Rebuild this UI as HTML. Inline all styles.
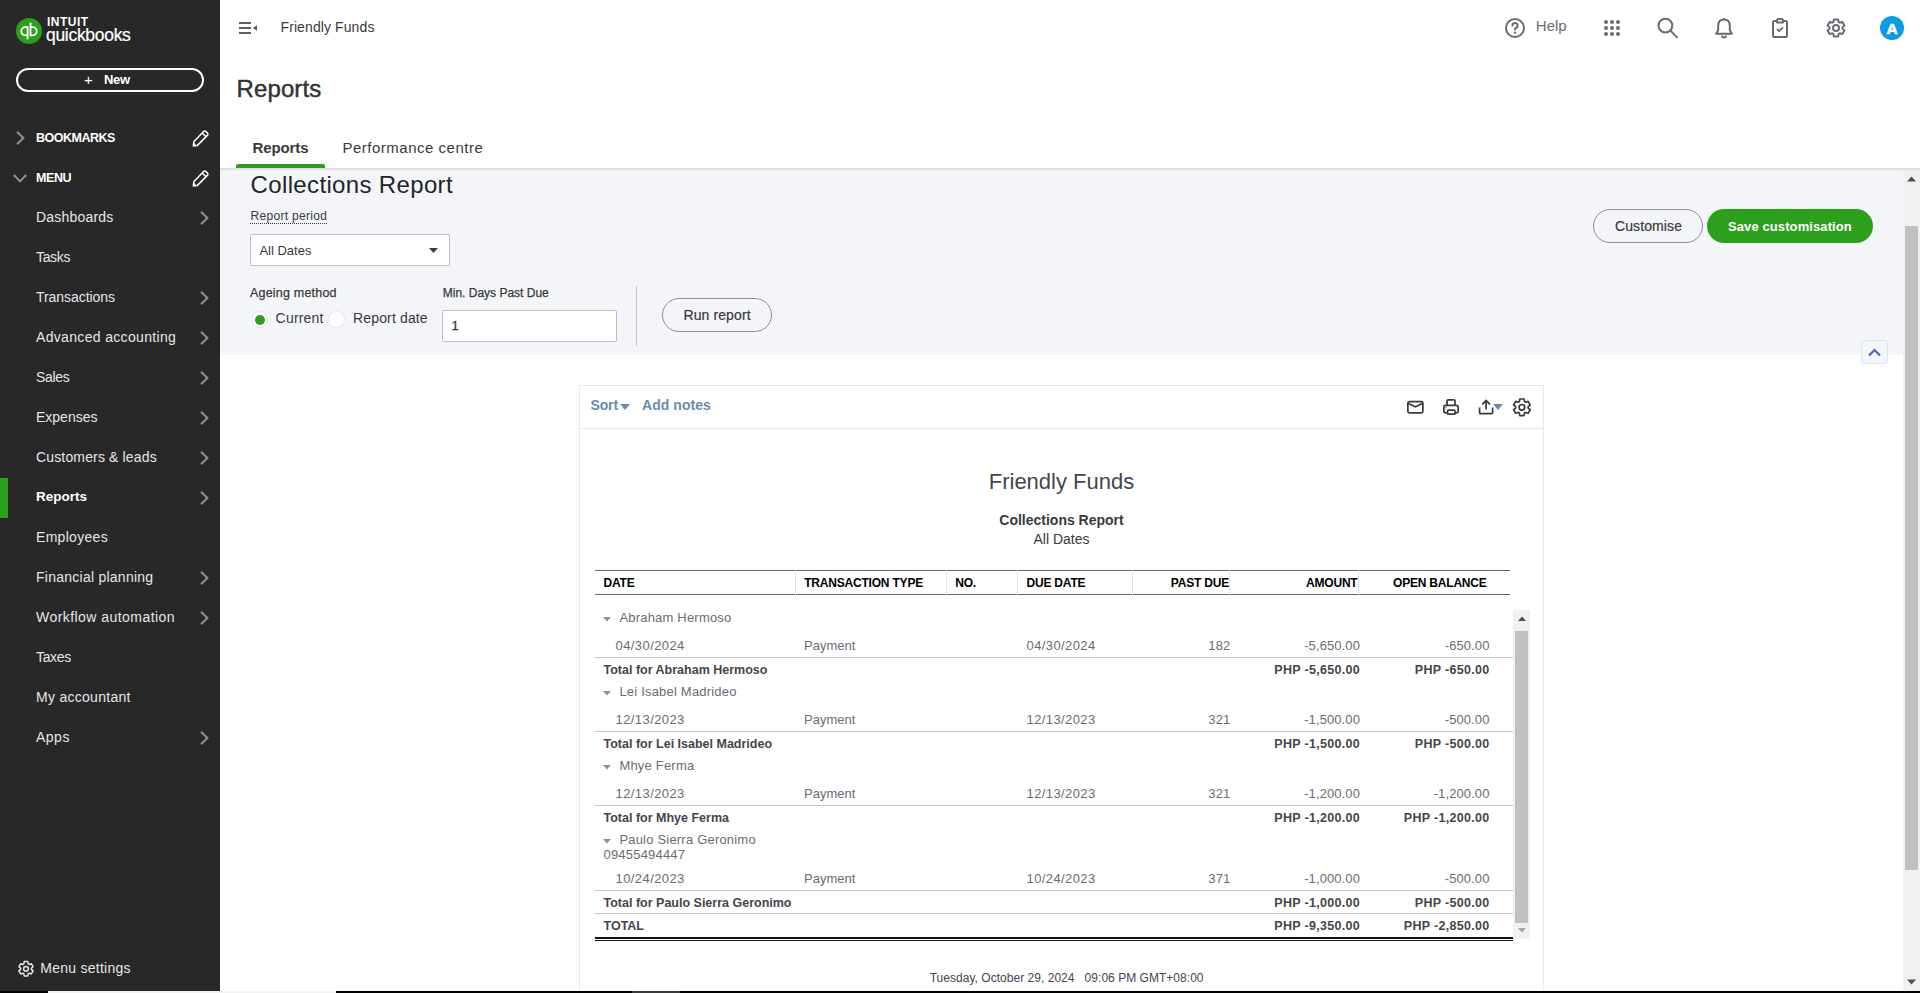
<!DOCTYPE html>
<html><head><meta charset="utf-8">
<style>
*{margin:0;padding:0;box-sizing:border-box}
html,body{width:1920px;height:993px;overflow:hidden;background:#fff;font-family:"Liberation Sans",sans-serif;color:#393a3d}
.t{position:absolute;white-space:nowrap;line-height:1}
.b{position:absolute}
svg{position:absolute;overflow:visible}
</style></head><body>
<div class="b" style="left:0px;top:0px;width:220px;height:991px;background:#282828"></div>
<svg style="left:16px;top:18px" width="26" height="26" viewBox="0 0 26 26">
<circle cx="13" cy="13" r="13" fill="#2ca01c"/>
<path d="M11.6 21.2 V9.1 H9.4 A4.1 4.1 0 0 0 9.4 17.3 H11.6" fill="none" stroke="#fff" stroke-width="1.8"/>
<path d="M14.5 4.8 V17.3 H16.6 A4.1 4.1 0 0 0 16.6 9.1 H14.5" fill="none" stroke="#fff" stroke-width="1.8"/>
</svg>
<div class="t" style="left:47px;top:15.84px;font-size:12px;color:#fff;font-weight:bold;letter-spacing:0.5px;">INTUIT</div>
<div class="t" style="left:46px;top:26.69px;font-size:17.5px;color:#fff;letter-spacing:-0.3px;-webkit-text-stroke:0.2px #fff;">quickbooks</div>
<div class="b" style="left:16px;top:68px;width:188px;height:24px;border:2px solid #fff;border-radius:12px"></div>
<div class="t" style="left:84px;top:72.45px;font-size:14px;color:#fff;font-size:15px;">+</div>
<div class="t" style="left:104px;top:73.30px;font-size:13px;color:#fff;font-weight:bold;letter-spacing:-0.3px;">New</div>
<div class="t" style="left:36px;top:132.02px;font-size:12.5px;color:#fff;font-weight:bold;letter-spacing:-0.5px;">BOOKMARKS</div>
<div class="t" style="left:36px;top:172.22px;font-size:12.5px;color:#fff;font-weight:bold;letter-spacing:-0.4px;">MENU</div>
<svg style="left:15.5px;top:131px" width="9" height="14" viewBox="0 0 9 14"><path d="M1 0.8 L7.4 7 L1 13.2" fill="none" stroke="#8d9096" stroke-width="2"/></svg>
<svg style="left:13px;top:174px" width="14" height="9" viewBox="0 0 14 9"><path d="M0.8 1 L7 7.4 L13.2 1" fill="none" stroke="#8d9096" stroke-width="2"/></svg>
<svg style="left:191.5px;top:129.5px" width="17" height="17" viewBox="0 0 17 17"><path d="M11.6 1.6 a1.6 1.6 0 0 1 2.3 0 l1.5 1.5 a1.6 1.6 0 0 1 0 2.3 L5.4 15.4 L1.3 16 L1.8 11.7 Z M10.2 3 L14 6.8" fill="none" stroke="#fff" stroke-width="1.5" stroke-linejoin="round"/><path d="M1.3 16 L1.8 12.6 L4.6 15.4 Z" fill="#fff"/></svg>
<svg style="left:191.5px;top:169.5px" width="17" height="17" viewBox="0 0 17 17"><path d="M11.6 1.6 a1.6 1.6 0 0 1 2.3 0 l1.5 1.5 a1.6 1.6 0 0 1 0 2.3 L5.4 15.4 L1.3 16 L1.8 11.7 Z M10.2 3 L14 6.8" fill="none" stroke="#fff" stroke-width="1.5" stroke-linejoin="round"/><path d="M1.3 16 L1.8 12.6 L4.6 15.4 Z" fill="#fff"/></svg>
<div class="t" style="left:36px;top:209.95px;font-size:14px;color:#e5e6e8;letter-spacing:0.2px;">Dashboards</div>
<svg style="left:199.5px;top:210.5px" width="9" height="14" viewBox="0 0 9 14"><path d="M1 0.8 L7.4 7 L1 13.2" fill="none" stroke="#8d9096" stroke-width="2"/></svg>
<div class="t" style="left:36px;top:249.95px;font-size:14px;color:#e5e6e8;letter-spacing:-0.35px;">Tasks</div>
<div class="t" style="left:36px;top:289.95px;font-size:14px;color:#e5e6e8;letter-spacing:-0.05px;">Transactions</div>
<svg style="left:199.5px;top:290.5px" width="9" height="14" viewBox="0 0 9 14"><path d="M1 0.8 L7.4 7 L1 13.2" fill="none" stroke="#8d9096" stroke-width="2"/></svg>
<div class="t" style="left:36px;top:329.95px;font-size:14px;color:#e5e6e8;letter-spacing:0.33px;">Advanced accounting</div>
<svg style="left:199.5px;top:330.5px" width="9" height="14" viewBox="0 0 9 14"><path d="M1 0.8 L7.4 7 L1 13.2" fill="none" stroke="#8d9096" stroke-width="2"/></svg>
<div class="t" style="left:36px;top:369.95px;font-size:14px;color:#e5e6e8;letter-spacing:-0.3px;">Sales</div>
<svg style="left:199.5px;top:370.5px" width="9" height="14" viewBox="0 0 9 14"><path d="M1 0.8 L7.4 7 L1 13.2" fill="none" stroke="#8d9096" stroke-width="2"/></svg>
<div class="t" style="left:36px;top:409.95px;font-size:14px;color:#e5e6e8;">Expenses</div>
<svg style="left:199.5px;top:410.5px" width="9" height="14" viewBox="0 0 9 14"><path d="M1 0.8 L7.4 7 L1 13.2" fill="none" stroke="#8d9096" stroke-width="2"/></svg>
<div class="t" style="left:36px;top:449.95px;font-size:14px;color:#e5e6e8;letter-spacing:0.15px;">Customers &amp; leads</div>
<svg style="left:199.5px;top:450.5px" width="9" height="14" viewBox="0 0 9 14"><path d="M1 0.8 L7.4 7 L1 13.2" fill="none" stroke="#8d9096" stroke-width="2"/></svg>
<div class="b" style="left:0px;top:478px;width:8px;height:40px;background:#2ca01c"></div>
<div class="t" style="left:36px;top:490.37px;font-size:13.5px;color:#fff;font-weight:bold;">Reports</div>
<svg style="left:199.5px;top:490.5px" width="9" height="14" viewBox="0 0 9 14"><path d="M1 0.8 L7.4 7 L1 13.2" fill="none" stroke="#8d9096" stroke-width="2"/></svg>
<div class="t" style="left:36px;top:529.95px;font-size:14px;color:#e5e6e8;letter-spacing:0.3px;">Employees</div>
<div class="t" style="left:36px;top:569.95px;font-size:14px;color:#e5e6e8;letter-spacing:0.25px;">Financial planning</div>
<svg style="left:199.5px;top:570.5px" width="9" height="14" viewBox="0 0 9 14"><path d="M1 0.8 L7.4 7 L1 13.2" fill="none" stroke="#8d9096" stroke-width="2"/></svg>
<div class="t" style="left:36px;top:609.95px;font-size:14px;color:#e5e6e8;letter-spacing:0.45px;">Workflow automation</div>
<svg style="left:199.5px;top:610.5px" width="9" height="14" viewBox="0 0 9 14"><path d="M1 0.8 L7.4 7 L1 13.2" fill="none" stroke="#8d9096" stroke-width="2"/></svg>
<div class="t" style="left:36px;top:649.95px;font-size:14px;color:#e5e6e8;letter-spacing:-0.35px;">Taxes</div>
<div class="t" style="left:36px;top:689.95px;font-size:14px;color:#e5e6e8;letter-spacing:0.28px;">My accountant</div>
<div class="t" style="left:36px;top:729.95px;font-size:14px;color:#e5e6e8;letter-spacing:0.5px;">Apps</div>
<svg style="left:199.5px;top:730.5px" width="9" height="14" viewBox="0 0 9 14"><path d="M1 0.8 L7.4 7 L1 13.2" fill="none" stroke="#8d9096" stroke-width="2"/></svg>
<svg style="left:16px;top:958px" width="20" height="20" viewBox="0 0 20 20"><path fill="none" stroke="#e5e6e8" stroke-width="1.5" stroke-linejoin="round" d="M7.80 5.87 L8.21 3.62 L11.79 3.62 L12.20 5.87 L13.17 6.43 L15.32 5.66 L17.11 8.76 L15.37 10.24 L15.37 11.36 L17.11 12.84 L15.32 15.94 L13.17 15.17 L12.20 15.73 L11.79 17.98 L8.21 17.98 L7.80 15.73 L6.83 15.17 L4.68 15.94 L2.89 12.84 L4.63 11.36 L4.63 10.24 L2.89 8.76 L4.68 5.66 L6.83 6.43 Z"/><circle cx="10" cy="10.8" r="2.4" fill="none" stroke="#e5e6e8" stroke-width="1.5"/></svg>
<div class="t" style="left:40.3px;top:960.95px;font-size:14px;color:#e5e6e8;letter-spacing:0.25px;">Menu settings</div>
<svg style="left:238px;top:21px" width="20" height="14" viewBox="0 0 20 14"><path d="M1 2 H13 M1 7 H13 M1 12 H13" stroke="#5f6066" stroke-width="2" fill="none"/><path d="M19 4 L14.8 7 L19 10 Z" fill="#5f6066"/></svg>
<div class="t" style="left:280.5px;top:19.85px;font-size:14px;color:#393a3d;letter-spacing:0.1px;">Friendly Funds</div>
<svg style="left:1505px;top:18px" width="20" height="20" viewBox="0 0 20 20"><circle cx="10" cy="10" r="9" fill="none" stroke="#6b6c72" stroke-width="2"/><path d="M7.4 7.6 A2.6 2.6 0 1 1 10.9 10 C10.2 10.3 10 10.8 10 11.6" fill="none" stroke="#6b6c72" stroke-width="2" stroke-linecap="round"/><circle cx="10" cy="14.6" r="1.2" fill="#6b6c72"/></svg>
<div class="t" style="left:1535.8px;top:17.90px;font-size:15px;color:#6b6c72;">Help</div>
<svg style="left:1604px;top:20px" width="16" height="16" viewBox="0 0 16 16"><circle cx="2" cy="2" r="2" fill="#6b6c72"/><circle cx="2" cy="8" r="2" fill="#6b6c72"/><circle cx="2" cy="14" r="2" fill="#6b6c72"/><circle cx="8" cy="2" r="2" fill="#6b6c72"/><circle cx="8" cy="8" r="2" fill="#6b6c72"/><circle cx="8" cy="14" r="2" fill="#6b6c72"/><circle cx="14" cy="2" r="2" fill="#6b6c72"/><circle cx="14" cy="8" r="2" fill="#6b6c72"/><circle cx="14" cy="14" r="2" fill="#6b6c72"/></svg>
<svg style="left:1657px;top:17px" width="22" height="22" viewBox="0 0 22 22"><circle cx="8.4" cy="8.6" r="6.9" fill="none" stroke="#6b6c72" stroke-width="2"/><path d="M13.4 13.6 L20 20.4" stroke="#6b6c72" stroke-width="2" stroke-linecap="round"/></svg>
<svg style="left:1715px;top:17px" width="18" height="22" viewBox="0 0 18 22"><path d="M9 1 V2.6 M9 2.6 C5 2.6 3.2 5.4 3.2 9 V13 L1.2 16.8 H16.8 L14.8 13 V9 C14.8 5.4 13 2.6 9 2.6 Z" fill="none" stroke="#6b6c72" stroke-width="2" stroke-linejoin="round"/><path d="M7 18.6 A2 2 0 0 0 11 18.6" fill="none" stroke="#6b6c72" stroke-width="2"/></svg>
<svg style="left:1772px;top:18px" width="16" height="20" viewBox="0 0 16 20"><rect x="1" y="3" width="14" height="16" rx="1.6" fill="none" stroke="#6b6c72" stroke-width="2"/><path d="M5 4.6 V2.6 A1.6 1.6 0 0 1 6.6 1 H9.4 A1.6 1.6 0 0 1 11 2.6 V4.6 Z" fill="#fff" stroke="#6b6c72" stroke-width="2" stroke-linejoin="round"/><path d="M5 11 L7.2 13 L11 9.4" fill="none" stroke="#6b6c72" stroke-width="1.8"/></svg>
<svg style="left:1825px;top:17px" width="22" height="22" viewBox="0 0 22 22"><path fill="none" stroke="#6b6c72" stroke-width="2" stroke-linejoin="round" d="M8.36 5.06 L8.87 2.46 L13.13 2.46 L13.64 5.06 L14.82 5.74 L17.33 4.89 L19.46 8.57 L17.46 10.32 L17.46 11.68 L19.46 13.43 L17.33 17.11 L14.82 16.26 L13.64 16.94 L13.13 19.54 L8.87 19.54 L8.36 16.94 L7.18 16.26 L4.67 17.11 L2.54 13.43 L4.54 11.68 L4.54 10.32 L2.54 8.57 L4.67 4.89 L7.18 5.74 Z"/><circle cx="11" cy="11" r="3" fill="none" stroke="#6b6c72" stroke-width="2"/></svg>
<div class="b" style="left:1880px;top:16px;width:24px;height:24px;background:#0d9be3;border-radius:50%"></div>
<div class="t" style="left:1880.0px;width:24px;text-align:center;top:20.78px;font-size:15.5px;color:#fff;font-weight:bold;-webkit-text-stroke:0.6px #fff;">A</div>
<div class="t" style="left:236.6px;top:76.68px;font-size:24px;color:#333;letter-spacing:0.1px;-webkit-text-stroke:0.45px #333;">Reports</div>
<div class="t" style="left:252.5px;top:140.30px;font-size:15px;color:#393a3d;font-weight:bold;letter-spacing:-0.1px;">Reports</div>
<div class="t" style="left:342.5px;top:140.30px;font-size:15px;color:#393a3d;letter-spacing:0.5px;">Performance centre</div>
<div class="b" style="left:236px;top:164px;width:89px;height:5px;background:#2ca01c;border-radius:2px 2px 0 0"></div>
<div class="b" style="left:220px;top:168px;width:1700px;height:2px;background:#dcdfe4"></div>
<div class="b" style="left:220px;top:170px;width:1683px;height:185px;background:#f4f5f8"></div>
<div class="t" style="left:250.6px;top:172.98px;font-size:24px;color:#21262b;letter-spacing:0.35px;">Collections Report</div>
<div class="t" style="left:250.6px;top:209.59px;font-size:12px;color:#393a3d;letter-spacing:0.3px;">Report period</div>
<div class="b" style="left:250px;top:223px;width:78px;height:1px;background-image:linear-gradient(90deg,#393a3d 50%,transparent 50%);background-size:2px 1px"></div>
<div class="b" style="left:250px;top:234px;width:200px;height:32px;background:#fff;border:1px solid #babec5;border-radius:2px"></div>
<div class="t" style="left:259.4px;top:244.00px;font-size:13px;color:#393a3d;">All Dates</div>
<svg style="left:429px;top:248px" width="9" height="5" viewBox="0 0 9 5"><path d="M0 0 H9 L4.5 5 Z" fill="#393a3d"/></svg>
<div class="t" style="left:250px;top:287.22px;font-size:12.5px;color:#393a3d;letter-spacing:0.2px;-webkit-text-stroke:0.25px #393a3d;">Ageing method</div>
<div class="t" style="left:442.75px;top:287.24px;font-size:12px;color:#393a3d;-webkit-text-stroke:0.25px #393a3d;">Min. Days Past Due</div>
<div class="b" style="left:251px;top:311px;width:17px;height:17px;background:#fff;border:1px solid #e3e5e8;border-radius:50%"></div>
<div class="b" style="left:254.5px;top:314.5px;width:10px;height:10px;background:#2ca01c;border-radius:50%"></div>
<div class="t" style="left:275.6px;top:311.15px;font-size:14px;color:#393a3d;letter-spacing:0.2px;">Current</div>
<div class="b" style="left:328px;top:311px;width:17px;height:17px;background:#fff;border:1px solid #e3e5e8;border-radius:50%"></div>
<div class="t" style="left:353px;top:311.15px;font-size:14px;color:#393a3d;letter-spacing:0.15px;">Report date</div>
<div class="b" style="left:442px;top:310px;width:175px;height:32px;background:#fff;border:1px solid #babec5;border-radius:2px"></div>
<div class="t" style="left:451.5px;top:319.30px;font-size:13px;color:#393a3d;-webkit-text-stroke:0.3px #393a3d;">1</div>
<div class="b" style="left:636px;top:286px;width:1px;height:60px;background:#c4c6ca"></div>
<div class="b" style="left:662px;top:298px;width:110px;height:34px;border:1px solid #8d9096;border-radius:17px"></div>
<div class="t" style="left:683.5px;top:308.15px;font-size:14px;color:#393a3d;letter-spacing:0.1px;-webkit-text-stroke:0.2px #393a3d;">Run report</div>
<div class="b" style="left:1593px;top:209px;width:110px;height:34px;border:1px solid #8d9096;border-radius:17px"></div>
<div class="t" style="left:1615px;top:218.95px;font-size:14px;color:#393a3d;letter-spacing:0.1px;-webkit-text-stroke:0.2px #393a3d;">Customise</div>
<div class="b" style="left:1707px;top:209px;width:166px;height:34px;background:#2ca01c;border-radius:17px"></div>
<div class="t" style="left:1728px;top:219.80px;font-size:13px;color:#fff;font-weight:bold;letter-spacing:0.1px;">Save customisation</div>
<div class="b" style="left:1861px;top:340px;width:27px;height:24px;background:#f3f5f9;border:1px solid #dbe4f1;border-radius:3px"></div>
<svg style="left:1868px;top:348px" width="13" height="9" viewBox="0 0 13 9"><path d="M1 7.6 L6.5 2 L12 7.6" fill="none" stroke="#4a6ab4" stroke-width="2.2"/></svg>
<div class="b" style="left:1903px;top:170px;width:17px;height:821px;background:#f1f1f1"></div>
<div class="b" style="left:1905px;top:226px;width:13px;height:644px;background:#c1c1c1"></div>
<svg style="left:1907px;top:176px" width="9" height="6" viewBox="0 0 9 6"><path d="M0 5.5 L4.5 0.5 L9 5.5 Z" fill="#505050"/></svg>
<svg style="left:1907px;top:979px" width="9" height="6" viewBox="0 0 9 6"><path d="M0 0.5 L4.5 5.5 L9 0.5 Z" fill="#505050"/></svg>
<div class="b" style="left:579px;top:385px;width:965px;height:620px;background:#fff;border:1px solid #e1e8f2"></div>
<div class="b" style="left:580px;top:428px;width:963px;height:1px;background:#e1e8f2"></div>
<div class="t" style="left:590.4px;top:397.95px;font-size:14px;color:#6b8bad;font-weight:bold;letter-spacing:-0.1px;">Sort</div>
<svg style="left:620px;top:404px" width="10" height="6" viewBox="0 0 10 6"><path d="M0 0 H10 L5 6 Z" fill="#6b8bad"/></svg>
<div class="t" style="left:642px;top:397.95px;font-size:14px;color:#6b8bad;font-weight:bold;letter-spacing:0.05px;">Add notes</div>
<svg style="left:1406px;top:400px" width="19" height="15" viewBox="0 0 19 15"><rect x="1.85" y="1.65" width="15.05" height="11.25" rx="1.6" fill="none" stroke="#393a3d" stroke-width="1.7"/><path d="M2.4 3.5 L9.4 6.8 L16.4 3.5" fill="none" stroke="#393a3d" stroke-width="1.5"/></svg>
<svg style="left:1442px;top:398px" width="18" height="18" viewBox="0 0 18 18"><rect x="5.1" y="1.85" width="7.9" height="6" rx="1" fill="none" stroke="#393a3d" stroke-width="1.7"/><rect x="1.85" y="7.45" width="14.3" height="7.4" rx="1.8" fill="#fff" stroke="#393a3d" stroke-width="1.7"/><rect x="5.55" y="12.2" width="7.45" height="4" rx="1" fill="#fff" stroke="#393a3d" stroke-width="1.7"/><rect x="3.6" y="9.2" width="1.1" height="1.1" fill="#393a3d"/></svg>
<svg style="left:1478px;top:399px" width="17" height="17" viewBox="0 0 17 17"><path d="M1.6 8.6 V13.6 A1 1 0 0 0 2.6 14.6 H13.6 A1 1 0 0 0 14.6 13.6 V8.6" fill="none" stroke="#393a3d" stroke-width="1.7"/><path d="M8.1 10.6 V1.8 M4.3 5.3 L8.1 1.4 L11.9 5.3" fill="none" stroke="#393a3d" stroke-width="1.7"/></svg>
<svg style="left:1493px;top:404px" width="10" height="6" viewBox="0 0 10 6"><path d="M0 0 H10 L5 6 Z" fill="#6b8bad"/></svg>
<svg style="left:1511px;top:396px" width="22" height="22" viewBox="0 0 22 22"><path fill="none" stroke="#393a3d" stroke-width="1.7" stroke-linejoin="round" d="M8.34 5.59 L8.82 3.01 L12.98 3.01 L13.46 5.59 L14.60 6.25 L17.09 5.38 L19.17 8.98 L17.17 10.69 L17.17 12.01 L19.17 13.72 L17.09 17.32 L14.60 16.45 L13.46 17.11 L12.98 19.69 L8.82 19.69 L8.34 17.11 L7.20 16.45 L4.71 17.32 L2.63 13.72 L4.63 12.01 L4.63 10.69 L2.63 8.98 L4.71 5.38 L7.20 6.25 Z"/><circle cx="10.9" cy="11.35" r="2.85" fill="none" stroke="#393a3d" stroke-width="1.7"/></svg>
<div class="t" style="left:911.5px;width:300px;text-align:center;top:471.38px;font-size:22px;color:#45464b;">Friendly Funds</div>
<div class="t" style="left:911.5px;width:300px;text-align:center;top:512.65px;font-size:14px;color:#393a3d;font-weight:bold;">Collections Report</div>
<div class="t" style="left:911.5px;width:300px;text-align:center;top:531.95px;font-size:14px;color:#393a3d;">All Dates</div>
<div class="b" style="left:595px;top:570px;width:915px;height:1px;background:#666"></div>
<div class="b" style="left:595px;top:594px;width:915px;height:1px;background:#666"></div>
<div class="b" style="left:795px;top:570px;width:1px;height:25px;background-image:linear-gradient(#c4c4c4 50%,#fff 50%);background-size:1px 2px"></div>
<div class="b" style="left:946px;top:570px;width:1px;height:25px;background-image:linear-gradient(#c4c4c4 50%,#fff 50%);background-size:1px 2px"></div>
<div class="b" style="left:1017px;top:570px;width:1px;height:25px;background-image:linear-gradient(#c4c4c4 50%,#fff 50%);background-size:1px 2px"></div>
<div class="b" style="left:1132px;top:570px;width:1px;height:25px;background-image:linear-gradient(#c4c4c4 50%,#fff 50%);background-size:1px 2px"></div>
<div class="b" style="left:1229px;top:570px;width:1px;height:25px;background-image:linear-gradient(#c4c4c4 50%,#fff 50%);background-size:1px 2px"></div>
<div class="b" style="left:1358px;top:570px;width:1px;height:25px;background-image:linear-gradient(#c4c4c4 50%,#fff 50%);background-size:1px 2px"></div>
<div class="t" style="left:603.5px;top:576.74px;font-size:12px;color:#000;font-weight:bold;letter-spacing:-0.2px;">DATE</div>
<div class="t" style="left:804.2px;top:576.74px;font-size:12px;color:#000;font-weight:bold;letter-spacing:-0.2px;">TRANSACTION TYPE</div>
<div class="t" style="left:955.2px;top:576.74px;font-size:12px;color:#000;font-weight:bold;letter-spacing:-0.2px;">NO.</div>
<div class="t" style="left:1026.5px;top:576.74px;font-size:12px;color:#000;font-weight:bold;letter-spacing:-0.2px;">DUE DATE</div>
<div class="t" style="right:691px;top:576.74px;font-size:12px;color:#000;font-weight:bold;letter-spacing:-0.2px;">PAST DUE</div>
<div class="t" style="right:562.5px;top:576.74px;font-size:12px;color:#000;font-weight:bold;letter-spacing:-0.2px;">AMOUNT</div>
<div class="t" style="left:1393px;top:576.74px;font-size:12px;color:#000;font-weight:bold;letter-spacing:-0.2px;">OPEN BALANCE</div>
<svg style="left:603px;top:617px" width="8" height="5" viewBox="0 0 8 5"><path d="M0 0 H8 L4 4.6 Z" fill="#8d9096"/></svg>
<div class="t" style="left:619.4px;top:610.90px;font-size:13px;color:#6b6c72;letter-spacing:0.2px;">Abraham Hermoso</div>
<div class="t" style="left:615.6px;top:638.90px;font-size:13px;color:#6b6c72;letter-spacing:0.4px;">04/30/2024</div>
<div class="t" style="left:804px;top:638.90px;font-size:13px;color:#6b6c72;">Payment</div>
<div class="t" style="left:1026.5px;top:638.90px;font-size:13px;color:#6b6c72;letter-spacing:0.4px;">04/30/2024</div>
<div class="t" style="right:689.5px;top:638.90px;font-size:13px;color:#6b6c72;letter-spacing:0.2px;">182</div>
<div class="t" style="right:560px;top:638.90px;font-size:13px;color:#6b6c72;letter-spacing:0.1px;">-5,650.00</div>
<div class="t" style="right:430.5px;top:638.90px;font-size:13px;color:#6b6c72;letter-spacing:0.1px;">-650.00</div>
<div class="b" style="left:595px;top:657px;width:918px;height:1px;background:#c5c7cb"></div>
<div class="t" style="left:603.5px;top:663.82px;font-size:12.5px;color:#45464a;font-weight:bold;">Total for Abraham Hermoso</div>
<div class="t" style="right:560px;top:663.82px;font-size:12.5px;color:#45464a;font-weight:bold;letter-spacing:0.3px;">PHP -5,650.00</div>
<div class="t" style="right:430.5px;top:663.82px;font-size:12.5px;color:#45464a;font-weight:bold;letter-spacing:0.3px;">PHP -650.00</div>
<svg style="left:603px;top:691px" width="8" height="5" viewBox="0 0 8 5"><path d="M0 0 H8 L4 4.6 Z" fill="#8d9096"/></svg>
<div class="t" style="left:619.4px;top:684.90px;font-size:13px;color:#6b6c72;letter-spacing:0.2px;">Lei Isabel Madrideo</div>
<div class="t" style="left:615.6px;top:712.90px;font-size:13px;color:#6b6c72;letter-spacing:0.4px;">12/13/2023</div>
<div class="t" style="left:804px;top:712.90px;font-size:13px;color:#6b6c72;">Payment</div>
<div class="t" style="left:1026.5px;top:712.90px;font-size:13px;color:#6b6c72;letter-spacing:0.4px;">12/13/2023</div>
<div class="t" style="right:689.5px;top:712.90px;font-size:13px;color:#6b6c72;letter-spacing:0.2px;">321</div>
<div class="t" style="right:560px;top:712.90px;font-size:13px;color:#6b6c72;letter-spacing:0.1px;">-1,500.00</div>
<div class="t" style="right:430.5px;top:712.90px;font-size:13px;color:#6b6c72;letter-spacing:0.1px;">-500.00</div>
<div class="b" style="left:595px;top:731px;width:918px;height:1px;background:#c5c7cb"></div>
<div class="t" style="left:603.5px;top:737.82px;font-size:12.5px;color:#45464a;font-weight:bold;">Total for Lei Isabel Madrideo</div>
<div class="t" style="right:560px;top:737.82px;font-size:12.5px;color:#45464a;font-weight:bold;letter-spacing:0.3px;">PHP -1,500.00</div>
<div class="t" style="right:430.5px;top:737.82px;font-size:12.5px;color:#45464a;font-weight:bold;letter-spacing:0.3px;">PHP -500.00</div>
<svg style="left:603px;top:765px" width="8" height="5" viewBox="0 0 8 5"><path d="M0 0 H8 L4 4.6 Z" fill="#8d9096"/></svg>
<div class="t" style="left:619.4px;top:758.90px;font-size:13px;color:#6b6c72;letter-spacing:0.2px;">Mhye Ferma</div>
<div class="t" style="left:615.6px;top:786.90px;font-size:13px;color:#6b6c72;letter-spacing:0.4px;">12/13/2023</div>
<div class="t" style="left:804px;top:786.90px;font-size:13px;color:#6b6c72;">Payment</div>
<div class="t" style="left:1026.5px;top:786.90px;font-size:13px;color:#6b6c72;letter-spacing:0.4px;">12/13/2023</div>
<div class="t" style="right:689.5px;top:786.90px;font-size:13px;color:#6b6c72;letter-spacing:0.2px;">321</div>
<div class="t" style="right:560px;top:786.90px;font-size:13px;color:#6b6c72;letter-spacing:0.1px;">-1,200.00</div>
<div class="t" style="right:430.5px;top:786.90px;font-size:13px;color:#6b6c72;letter-spacing:0.1px;">-1,200.00</div>
<div class="b" style="left:595px;top:805px;width:918px;height:1px;background:#c5c7cb"></div>
<div class="t" style="left:603.5px;top:811.82px;font-size:12.5px;color:#45464a;font-weight:bold;">Total for Mhye Ferma</div>
<div class="t" style="right:560px;top:811.82px;font-size:12.5px;color:#45464a;font-weight:bold;letter-spacing:0.3px;">PHP -1,200.00</div>
<div class="t" style="right:430.5px;top:811.82px;font-size:12.5px;color:#45464a;font-weight:bold;letter-spacing:0.3px;">PHP -1,200.00</div>
<svg style="left:603px;top:839px" width="8" height="5" viewBox="0 0 8 5"><path d="M0 0 H8 L4 4.6 Z" fill="#8d9096"/></svg>
<div class="t" style="left:619.4px;top:832.75px;font-size:13px;color:#6b6c72;letter-spacing:0.2px;">Paulo Sierra Geronimo</div>
<div class="t" style="left:603.5px;top:847.75px;font-size:13px;color:#6b6c72;letter-spacing:0.2px;">09455494447</div>
<div class="t" style="left:615.6px;top:871.75px;font-size:13px;color:#6b6c72;letter-spacing:0.4px;">10/24/2023</div>
<div class="t" style="left:804px;top:871.75px;font-size:13px;color:#6b6c72;">Payment</div>
<div class="t" style="left:1026.5px;top:871.75px;font-size:13px;color:#6b6c72;letter-spacing:0.4px;">10/24/2023</div>
<div class="t" style="right:689.5px;top:871.75px;font-size:13px;color:#6b6c72;letter-spacing:0.2px;">371</div>
<div class="t" style="right:560px;top:871.75px;font-size:13px;color:#6b6c72;letter-spacing:0.1px;">-1,000.00</div>
<div class="t" style="right:430.5px;top:871.75px;font-size:13px;color:#6b6c72;letter-spacing:0.1px;">-500.00</div>
<div class="b" style="left:595px;top:890px;width:918px;height:1px;background:#c5c7cb"></div>
<div class="t" style="left:603.5px;top:896.67px;font-size:12.5px;color:#45464a;font-weight:bold;">Total for Paulo Sierra Geronimo</div>
<div class="t" style="right:560px;top:896.67px;font-size:12.5px;color:#45464a;font-weight:bold;letter-spacing:0.3px;">PHP -1,000.00</div>
<div class="t" style="right:430.5px;top:896.67px;font-size:12.5px;color:#45464a;font-weight:bold;letter-spacing:0.3px;">PHP -500.00</div>
<div class="b" style="left:595px;top:913px;width:918px;height:1px;background:#c5c7cb"></div>
<div class="t" style="left:603.5px;top:919.92px;font-size:12.5px;color:#45464a;font-weight:bold;">TOTAL</div>
<div class="t" style="right:560px;top:919.92px;font-size:12.5px;color:#45464a;font-weight:bold;letter-spacing:0.3px;">PHP -9,350.00</div>
<div class="t" style="right:430.5px;top:919.92px;font-size:12.5px;color:#45464a;font-weight:bold;letter-spacing:0.3px;">PHP -2,850.00</div>
<div class="b" style="left:595px;top:937px;width:918px;height:2px;background:#111"></div>
<div class="b" style="left:595px;top:940px;width:918px;height:1px;background:#111"></div>
<div class="b" style="left:1513px;top:610px;width:17px;height:329px;background:#f1f1f1"></div>
<div class="b" style="left:1515px;top:631px;width:13px;height:292px;background:#c1c1c1"></div>
<svg style="left:1518px;top:616px" width="8" height="5" viewBox="0 0 8 5"><path d="M0 5 L4 0.5 L8 5 Z" fill="#505050"/></svg>
<svg style="left:1518px;top:928px" width="8" height="5" viewBox="0 0 8 5"><path d="M0 0 L4 4.5 L8 0 Z" fill="#a3a3a3"/></svg>
<div class="t" style="left:929.7px;top:971.74px;font-size:12px;color:#45464a;letter-spacing:0.03px;">Tuesday, October 29, 2024 &nbsp; 09:06 PM GMT+08:00</div>
<div class="b" style="left:0px;top:991px;width:1920px;height:2px;background:#000"></div>
<div class="b" style="left:48px;top:991px;width:288px;height:2px;background:#f2f2f2"></div>
<div class="b" style="left:632px;top:991px;width:48px;height:2px;background:#3a3a3a"></div>

<!--REST-->
</body></html>
